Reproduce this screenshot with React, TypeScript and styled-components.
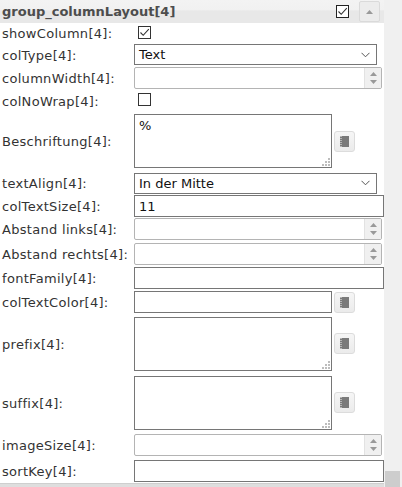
import React from 'react';
import styled, { createGlobalStyle } from 'styled-components';

const GlobalStyle = createGlobalStyle`
  html, body {
    margin: 0;
    padding: 0;
    background: #ffffff;
  }
  body {
    font-family: 'DejaVu Sans', Verdana, sans-serif;
    font-size: 13px;
    color: #333333;
  }
`;

const Frame = styled.div`
  width: 402px;
  height: 487px;
  display: flex;
  overflow: hidden;
`;

const Main = styled.div`
  width: 384px;
  display: flex;
  flex-direction: column;
`;

const VScroll = styled.div`
  width: 18px;
  background: #f0f0f0;
  display: flex;
  flex-direction: column;
  justify-content: flex-end;
  padding-left: 1px;
  box-sizing: border-box;
`;

const VThumb = styled.div`
  width: 15px;
  height: 16px;
  background: #cdcdcd;
`;

const HScroll = styled.div`
  height: 3px;
  background: #dedede;
  border-top: 1px solid #cfcfcf;
`;

const Header = styled.div`
  height: 24px;
  display: flex;
  align-items: center;
  padding: 0 4px 0 2px;
  background: linear-gradient(#f3f3f3 0, #f1f1f1 45%, #e8e8e8 46%, #e8e8e8 100%);
`;

const Title = styled.div`
  flex: 1;
  font-weight: bold;
  font-size: 13px;
  color: #4d4d4d;
`;

const CollapseButton = styled.div`
  width: 19px;
  height: 19px;
  margin-left: 10px;
  border: 1px solid #dadada;
  border-radius: 2px;
  background: #ececec;
  display: flex;
  align-items: center;
  justify-content: center;
`;

const Rows = styled.div`
  display: flex;
  flex-direction: column;
`;

const Row = styled.div<{ $h: number }>`
  height: ${(p) => p.$h}px;
  display: grid;
  grid-template-columns: 134px 1fr;
  align-items: center;
`;

const Label = styled.div`
  padding-left: 2px;
  white-space: nowrap;
  font-size: 13px;
  letter-spacing: 0.3px;
  color: #333333;
  padding-top: 1px;
`;

const Field = styled.div`
  display: flex;
  align-items: center;
  gap: 2px;
`;

const Box = styled.span<{ $dark?: boolean }>`
  width: 11px;
  height: 11px;
  border: 1px solid ${(p) => (p.$dark ? '#222' : '#333')};
  background: #fff;
  display: inline-flex;
  align-items: center;
  justify-content: center;
  margin-left: ${(p) => (p.$dark ? '0' : '4px')};
`;

const SelectBox = styled.div`
  width: 243px;
  height: 21px;
  box-sizing: border-box;
  border: 1px solid #767676;
  background: #fff;
  display: flex;
  align-items: center;
  justify-content: space-between;
  padding: 0 6px 0 4px;
  font-size: 13px;
  color: #111;
`;

const TextInput = styled.div<{ $w: number }>`
  width: ${(p) => p.$w}px;
  height: 22px;
  box-sizing: border-box;
  border: 1px solid #767676;
  background: #fff;
  display: flex;
  align-items: center;
  padding: 0 4px;
  font-size: 13px;
  color: #111;
`;

const NumberInput = styled.div`
  width: 248px;
  height: 22px;
  box-sizing: border-box;
  border: 1px solid #b4b4b4;
  border-radius: 2px;
  background: #fff;
  display: flex;
  justify-content: flex-end;
  overflow: hidden;
`;

const Spinner = styled.div`
  width: 16px;
  background: #f0f0f0;
  border-left: 1px solid #e2e2e2;
  display: flex;
  flex-direction: column;
  align-items: center;
  justify-content: space-evenly;
`;

const TextArea = styled.div`
  width: 198px;
  height: 54px;
  box-sizing: border-box;
  border: 1px solid #767676;
  background: #fff;
  padding: 3px 4px;
  font-size: 13px;
  color: #111;
  display: flex;
  flex-direction: column;
  justify-content: space-between;
`;

const Grip = styled.svg`
  align-self: flex-end;
  margin: 0 -3px -2px 0;
`;

const IconButton = styled.div`
  width: 19px;
  height: 19px;
  border: 1px solid #dcdcdc;
  border-radius: 3px;
  background: linear-gradient(#f6f6f6, #ebebeb);
  display: flex;
  align-items: center;
  justify-content: center;
`;

const Check = () => (
  <svg width="11" height="11" viewBox="0 0 11 11">
    <path d="M1.5 5.5 L4.2 8.3 L9.8 2.2" fill="none" stroke="#333" strokeWidth="1.1" />
  </svg>
);

const Triangle = ({ down }: { down?: boolean }) => (
  <svg width="7" height="4" viewBox="0 0 7 4">
    <path d={down ? 'M0 0 H7 L3.5 4 Z' : 'M0 4 H7 L3.5 0 Z'} fill="#999" />
  </svg>
);

const Chevron = () => (
  <svg width="9" height="6" viewBox="0 0 9 6">
    <path d="M0.5 0.8 L4.5 4.8 L8.5 0.8" fill="none" stroke="#555" strokeWidth="1" />
  </svg>
);

const NotebookIcon = () => (
  <svg width="9" height="11" viewBox="0 0 9 11">
    <rect x="2" y="0" width="7" height="11" fill="#7a7a7a" />
    <rect x="0" y="0" width="2" height="11" fill="#b5b5b5" />
    {[1, 3, 5, 7, 9].map((y) => (
      <rect key={y} x="0" y={y} width="2" height="1" fill="#7a7a7a" />
    ))}
  </svg>
);

const ResizeGrip = () => (
  <Grip width="8" height="8" viewBox="0 0 8 8">
    {[
      [6, 0],
      [3, 3],
      [6, 3],
      [0, 6],
      [3, 6],
      [6, 6],
    ].map(([x, y], i) => (
      <rect key={i} x={x} y={y} width="2" height="2" fill="#bdbdbd" />
    ))}
  </Grip>
);

const CheckBox = ({ checked }: { checked?: boolean }) => <Box>{checked && <Check />}</Box>;

const Select = ({ value }: { value: string }) => (
  <SelectBox>
    <span>{value}</span>
    <Chevron />
  </SelectBox>
);

const Number = () => (
  <NumberInput>
    <Spinner>
      <Triangle />
      <Triangle down />
    </Spinner>
  </NumberInput>
);

const Area = ({ value, button }: { value?: string; button?: boolean }) => (
  <Field>
    <TextArea>
      <span>{value}</span>
      <ResizeGrip />
    </TextArea>
    {button && (
      <IconButton>
        <NotebookIcon />
      </IconButton>
    )}
  </Field>
);

interface RowDef {
  label: string;
  h: number;
  field: React.ReactNode;
}

const rows: RowDef[] = [
  { label: 'showColumn[4]:', h: 20, field: <CheckBox checked /> },
  { label: 'colType[4]:', h: 23, field: <Select value="Text" /> },
  { label: 'columnWidth[4]:', h: 24, field: <Number /> },
  { label: 'colNoWrap[4]:', h: 21, field: <CheckBox /> },
  { label: 'Beschriftung[4]:', h: 60, field: <Area value="%" button /> },
  { label: 'textAlign[4]:', h: 24, field: <Select value="In der Mitte" /> },
  { label: 'colTextSize[4]:', h: 22, field: <TextInput $w={250}>11</TextInput> },
  { label: 'Abstand links[4]:', h: 24, field: <Number /> },
  { label: 'Abstand rechts[4]:', h: 25, field: <Number /> },
  { label: 'fontFamily[4]:', h: 24, field: <TextInput $w={250} /> },
  {
    label: 'colTextColor[4]:',
    h: 24,
    field: (
      <Field>
        <TextInput $w={198} />
        <IconButton>
          <NotebookIcon />
        </IconButton>
      </Field>
    ),
  },
  { label: 'prefix[4]:', h: 59, field: <Area button /> },
  { label: 'suffix[4]:', h: 59, field: <Area button /> },
  { label: 'imageSize[4]:', h: 26, field: <Number /> },
  { label: 'sortKey[4]:', h: 25, field: <TextInput $w={250} /> },
];

const App: React.FC = () => (
  <>
    <GlobalStyle />
    <Frame>
      <Main>
        <Header>
          <Title>group_columnLayout[4]</Title>
          <Box $dark>
            <Check />
          </Box>
          <CollapseButton>
            <Triangle />
          </CollapseButton>
        </Header>
        <Rows>
          {rows.map((r) => (
            <Row key={r.label} $h={r.h}>
              <Label>{r.label}</Label>
              <div>{r.field}</div>
            </Row>
          ))}
        </Rows>
        <HScroll />
      </Main>
      <VScroll>
        <VThumb />
      </VScroll>
    </Frame>
  </>
);

export default App;
